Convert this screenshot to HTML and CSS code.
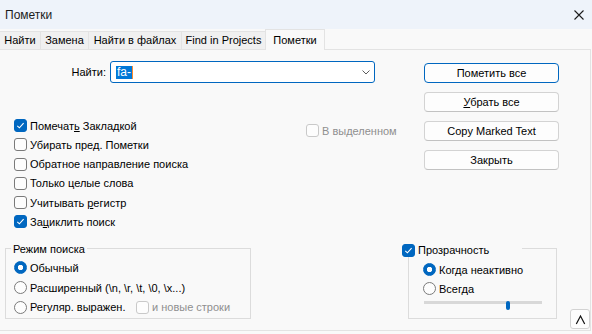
FILE: index.html
```html
<!DOCTYPE html>
<html lang="ru">
<head>
    <meta charset="UTF-8">
    <meta name="viewport" content="width=device-width, initial-scale=1.0">
    <title>Пометки</title>
    <link rel="stylesheet" href="styles.css">
</head>
<body>
<div class="dialog">
    <!-- Title bar -->
    <div class="titlebar">
        <span class="title">Пометки</span>
        <svg class="close" width="10" height="10" viewBox="0 0 10 10">
            <path d="M0.5 0.5 L9.5 9.5 M9.5 0.5 L0.5 9.5" stroke="#1b1b1b" stroke-width="1.1" fill="none"/>
        </svg>
    </div>

    <!-- Tabs -->
    <div class="tabs">
        <div class="tab tab-find">Найти</div>
        <div class="tab tab-replace">Замена</div>
        <div class="tab tab-files">Найти в файлах</div>
        <div class="tab tab-projects">Find in Projects</div>
        <div class="tab tab-mark active">Пометки</div>
    </div>

    <div class="panel">
        <div class="top">
            <div class="search-side">
                <div class="find-row">
                    <label class="find-label" for="find-what">Найти:</label>
                    <div class="combo" id="find-what">
                        <span class="sel">fa-</span><span class="caret"></span>
                        <svg class="chevron" width="8" height="5" viewBox="0 0 8 5">
                            <path d="M0.5 0.5 L4 4 L7.5 0.5" stroke="#5c5c5c" stroke-width="1" fill="none"/>
                        </svg>
                    </div>
                </div>

                <div class="options">
                    <ul class="checklist">
                        <li class="check"><span class="box on"><svg width="11" height="11" viewBox="0 0 11 11"><path d="M2.3 5.8 L4.4 7.8 L8.6 3.2" stroke="#fff" stroke-width="1.1" fill="none"/></svg></span><span>Помечат<u>ь</u> Закладкой</span></li>
                        <li class="check"><span class="box"></span><span>Убирать пред. Пометки</span></li>
                        <li class="check"><span class="box"></span><span>Обратное направление поиска</span></li>
                        <li class="check"><span class="box"></span><span>Только целые слова</span></li>
                        <li class="check"><span class="box"></span><span>Учитывать <u>р</u>егистр</span></li>
                        <li class="check"><span class="box on"><svg width="11" height="11" viewBox="0 0 11 11"><path d="M2.3 5.8 L4.4 7.8 L8.6 3.2" stroke="#fff" stroke-width="1.1" fill="none"/></svg></span><span>За<u>ц</u>иклить поиск</span></li>
                    </ul>
                    <div class="check disabled in-selection"><span class="box"></span><span>В выделенном</span></div>
                </div>
            </div>

            <div class="buttons">
                <button class="btn default">Пометить все</button>
                <button class="btn"><u>У</u>брать все</button>
                <button class="btn">Copy Marked Text</button>
                <button class="btn">Закрыть</button>
            </div>
        </div>

        <div class="bottom">
            <fieldset class="group mode">
                <legend>Режим поиска</legend>
                <div class="check radio-row"><span class="radio on"></span><span>Обычный</span></div>
                <div class="check radio-row"><span class="radio"></span><span>Расширенный (\n, \r, \t, \0, \x...)</span></div>
                <div class="check radio-row">
                    <span class="regex"><span class="radio"></span><span>Регуляр. выражен.</span></span>
                    <span class="check disabled"><span class="box"></span><span>и новые строки</span></span>
                </div>
            </fieldset>

            <fieldset class="group transparency">
                <legend class="check"><span class="box on"><svg width="11" height="11" viewBox="0 0 11 11"><path d="M2.3 5.8 L4.4 7.8 L8.6 3.2" stroke="#fff" stroke-width="1.1" fill="none"/></svg></span><span>Прозрачность</span></legend>
                <div class="check trans-row"><span class="radio on"></span><span>Когда неактивно</span></div>
                <div class="check trans-row"><span class="radio"></span><span>Всегда</span></div>
                <div class="slider">
                    <div class="track"></div>
                    <div class="thumb" style="left: 82px;"></div>
                </div>
            </fieldset>

            <button class="collapse">
                <svg width="20" height="20" viewBox="0 0 20 20">
                    <path d="M6.3 15 L10.5 7 L14.7 15" stroke="#111" stroke-width="1.2" fill="none"/>
                </svg>
            </button>
        </div>
    </div>
</div>
</body>
</html>
```

FILE: styles.css
```css
* { box-sizing: border-box; }

body {
    margin: 0;
    font-family: "Liberation Sans", Arial, sans-serif;
    font-size: 11px;
    line-height: 16px;
    color: #000;
    background: #f9f9f9;
}

.dialog {
    width: 592px;
    height: 334px;
    overflow: hidden;
    background: #f9f9f9;
}

/* title bar */
.titlebar {
    height: 29px;
    display: flex;
    align-items: center;
    justify-content: space-between;
    padding: 0 8px 0 5px;
    background: #eef3fa;
    color: #1b1b1b;
    font-size: 12px;
}

/* tabs */
.tabs {
    display: flex;
    align-items: flex-end;
    width: 591px;
    height: 21px;
    border-bottom: 1px solid #e3e3e3;
}
.tab {
    flex: none;
    height: 18px;
    line-height: 17px;
    text-align: center;
    white-space: nowrap;
    background: #f0f0f0;
    border-top: 1px solid #e3e3e3;
    border-right: 1px solid #e3e3e3;
}
.tab-find { width: 41px; }
.tab-replace { width: 48px; }
.tab-files { width: 93px; }
.tab-projects { width: 84px; }
.tab.active {
    width: 60px;
    height: 21px;
    margin-left: -1px;
    margin-bottom: -1px;
    padding-top: 2px;
    background: #f9f9f9;
    border-left: 1px solid #e3e3e3;
}

/* panel */
.panel {
    width: 591px;
    height: 281px;
    border-right: 1px solid #e3e3e3;
    border-bottom: 1px solid #e3e3e3;
}
.top {
    display: flex;
    height: 190px;
}
.search-side { width: 424px; }

.find-row {
    display: flex;
    align-items: center;
    margin-top: 11px;
}
.find-label {
    width: 106px;
    margin-right: 4px;
    text-align: right;
}
.combo {
    display: flex;
    align-items: center;
    width: 265px;
    height: 22px;
    padding-left: 5px;
    background: #fff;
    border: 1px solid #0067c0;
    border-radius: 3px;
}
.sel {
    height: 13px;
    line-height: 13px;
    padding: 0 1px;
    font-size: 12px;
    background: #0078d7;
    color: #fff;
}
.caret {
    width: 1px;
    height: 13px;
    background: #ff8a2a;
}
.chevron { margin-left: auto; margin-right: 4px; }

/* checkboxes */
.options {
    display: flex;
    margin-top: 33px;
}
.checklist {
    width: 306px;
    margin: 0;
    padding: 0 0 0 14px;
    list-style: none;
}
.check {
    display: flex;
    align-items: center;
    height: 19.25px;
    white-space: nowrap;
}
.box {
    display: flex;
    align-items: center;
    justify-content: center;
    flex: none;
    width: 13px;
    height: 13px;
    margin-right: 3px;
    background: #fdfdfd;
    border: 1px solid #7a7a7a;
    border-radius: 3px;
}
.box.on {
    background: #0067c0;
    border-color: #0067c0;
}
.disabled { color: #8f8f8f; }
.disabled .box { border-color: #c9c9c9; }
.in-selection { margin-top: 5px; }

.radio {
    flex: none;
    width: 13px;
    height: 13px;
    margin-right: 3px;
    background: #fdfdfd;
    border: 1px solid #7a7a7a;
    border-radius: 50%;
}
.radio.on {
    border-color: #0067c0;
    background: radial-gradient(circle, #fff 2.4px, #0067c0 3px);
}

/* buttons */
.buttons {
    display: flex;
    flex-direction: column;
    gap: 9px;
    width: 135px;
    margin-top: 13px;
}
.btn {
    height: 20px;
    padding: 0;
    font: inherit;
    color: #000;
    background: #fdfdfd;
    border: 1px solid #d3d3d3;
    border-bottom-color: #c2c2c2;
    border-radius: 4px;
}
.btn.default { border-color: #0067c0; }

/* group boxes */
.bottom {
    display: flex;
    align-items: flex-start;
}
.group {
    height: 79px;
    margin: 0;
    border: 1px solid #dcdcdc;
}
.group legend {
    line-height: 16px;
    padding: 0 2px;
}
.mode {
    width: 246px;
    margin-left: 5px;
    padding: 2px 0 0 8px;
}
.mode legend {
    height: 16px;
    margin-left: -3px;
    padding-top: 3px;
    line-height: 13px;
}
.radio-row { height: 19.8px; }
.regex {
    display: flex;
    align-items: center;
    width: 122px;
}

.transparency {
    width: 149px;
    margin-left: 157px;
    padding: 4px 0 0 14px;
}
.transparency legend {
    width: 120px;
    height: 16px;
    margin-left: -21px;
    padding: 4px 0 0;
}
.trans-row { height: 19px; }

.slider {
    position: relative;
    width: 118px;
    height: 9px;
    margin: 3px 0 0 1px;
}
.track {
    height: 3px;
    margin-top: 3px;
    background: #d8d8d8;
}
.thumb {
    position: absolute;
    top: 0;
    width: 4px;
    height: 9px;
    background: #0067c0;
    border-radius: 2px;
}

.collapse {
    width: 20px;
    height: 20px;
    margin: 69px 0 0 13px;
    padding: 0;
    background: #fdfdfd;
    border: 1px solid #d3d3d3;
    border-radius: 3px;
}
.collapse svg { display: block; margin: -1px; }
```
